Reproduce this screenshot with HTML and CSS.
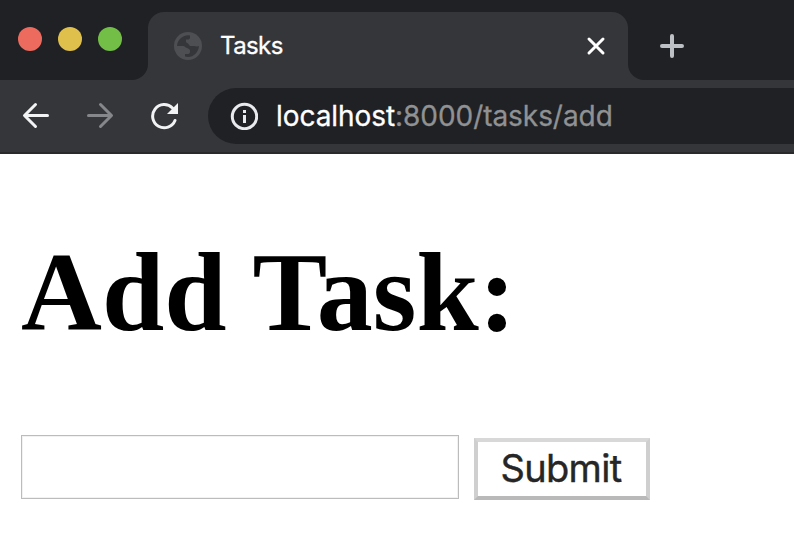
FILE: index.html
```html
<!DOCTYPE html>
<html lang="en">
<head>
<meta charset="utf-8">
<title>Tasks</title>
<link rel="stylesheet" href="styles.css">
</head>
<body>
<header class="browser">
  <div class="tabstrip">
    <div class="lights"><i class="light red"></i><i class="light yellow"></i><i class="light green"></i></div>
    <div class="tab">
      <svg class="globe" width="28" height="28" viewBox="0 0 28 28"><circle cx="14" cy="14" r="14" fill="#4d4f53"/><path d="M3 14C3.500 8 8 3.500 14 3.300L16 3.500V5.500C16 7 15 7.500 13.500 7.500H12V9.500C12 10.500 13 11 14 11.500L16 14H20C22 14.500 24 14.500 25 14C24.500 20 20 25 14 25L11 24.500V22H14C15.500 22 16 21 16 19.500V18.500C15.500 17 14.500 16.500 13 16C11 15.500 11 14 9 14Z" fill="#35363a"/></svg>
      <span class="tab-title">Tasks</span>
      <svg class="close" width="20" height="20" viewBox="0 0 20 20"><path d="M3 3L17 17M17 3L3 17"/></svg>
    </div>
    <svg class="plus" width="24" height="24" viewBox="0 0 24 24"><path d="M12 2V22M2 12H22"/></svg>
  </div>
  <div class="toolbar">
    <svg class="nav back" width="28" height="28" viewBox="0 0 28 28"><path d="M25.500 13.500H3M13.500 2.500L2.500 13.500L13.500 24.500"/></svg>
    <svg class="nav forward" width="28" height="28" viewBox="0 0 28 28"><path d="M2.500 13.500H25M14.500 2.500L25.500 13.500L14.500 24.500"/></svg>
    <svg class="nav reload" width="28" height="28" viewBox="0 0 28 28"><path d="M25 18.500A11.600 11.600 0 1 1 22.500 6"/><path class="head" d="M28 1V12H17Z"/></svg>
    <div class="address">
      <svg class="info" width="28" height="28" viewBox="0 0 28 28"><circle cx="14.500" cy="14.500" r="12.200"/><path d="M14.500 13V21M14.500 8V11"/></svg>
      <span class="url"><span class="host">localhost</span>:8000/tasks/add</span>
    </div>
  </div>
</header>
<main class="page">
  <h1>Add Task:</h1>
  <form class="form">
    <input class="field" type="text" aria-label="Task">
    <button class="submit" type="button">Submit</button>
  </form>
</main>
</body>
</html>
```

FILE: styles.css
```css
* { box-sizing: border-box; }
body { margin: 0; background: #fff; overflow: hidden; }
svg { display: block; flex: none; fill: none; stroke-linecap: round; stroke-linejoin: round; }
.browser { height: 154px; background: #35363a; border-bottom: 2px solid #29292b; font-family: Inter, "Liberation Sans", sans-serif; }
.tabstrip { height: 80px; display: flex; background: linear-gradient(#202124, #202124) 0 0 / 100% 64px no-repeat; }
.lights { width: 148px; height: 80px; padding: 27px 0 0 18px; display: flex; gap: 16px; background: #202124; border-bottom-right-radius: 16px; }
.light { width: 24px; height: 24px; border-radius: 50%; }
.red { background: #ed6a5e; }
.yellow { background: #e0c04c; }
.green { background: #72be47; }
.tab { width: 480px; height: 68px; margin-top: 12px; padding: 0 22px 0 26px; display: flex; align-items: center; background: #35363a; border-radius: 16px 16px 0 0; }
.tab-title { margin-left: 18px; flex: 1; color: #fff; font-size: 24px; line-height: 30px; letter-spacing: -0.6px; -webkit-text-stroke: 0.3px; }
.close { stroke: #fff; stroke-width: 3; }
.plus { box-sizing: content-box; padding: 34px 110px 22px 32px; background: #202124; border-bottom-left-radius: 16px; stroke: #bdc1c6; stroke-width: 4; }
.toolbar { height: 72px; padding: 8px 0 8px 22px; display: flex; align-items: center; }
.nav { margin-right: 36px; stroke: #f1f3f4; stroke-width: 3; }
.forward { stroke: #86878a; }
.reload { margin-right: 30px; }
.reload .head { fill: #f1f3f4; stroke: none; }
.address { flex: 1; height: 56px; padding-left: 22px; display: flex; align-items: center; background: #202124; border-radius: 28px 0 0 28px; }
.info { stroke: #e8eaed; stroke-width: 3; stroke-linecap: butt; }
.url { margin-left: 18px; color: #909193; font-size: 28px; line-height: 36px; letter-spacing: -0.06px; white-space: nowrap; -webkit-text-stroke: 0.3px; }
.host { color: #fff; }
.page { padding: 73px 21px 0; }
h1 { margin: 0; font: bold 112px/130px "Liberation Serif", serif; white-space: nowrap; }
.form { margin-top: 78px; display: flex; align-items: flex-start; gap: 15px; }
.field { width: 438px; height: 64px; margin: 0; border: 1px solid #bcbcbc; background: #fff; box-shadow: inset 0 0 0 1px #f2f2f2; font-size: 38px; }
.submit { width: 176px; height: 62px; margin-top: 3px; padding: 0 2px 2px 0; border: 4px solid; border-color: #d8d8d8 #cfcfcf #b9b9b9; background: #fff; color: #262626; font: 38px/52px Inter, "Liberation Sans", sans-serif; letter-spacing: -0.7px; -webkit-text-stroke: 0.4px; }
```
